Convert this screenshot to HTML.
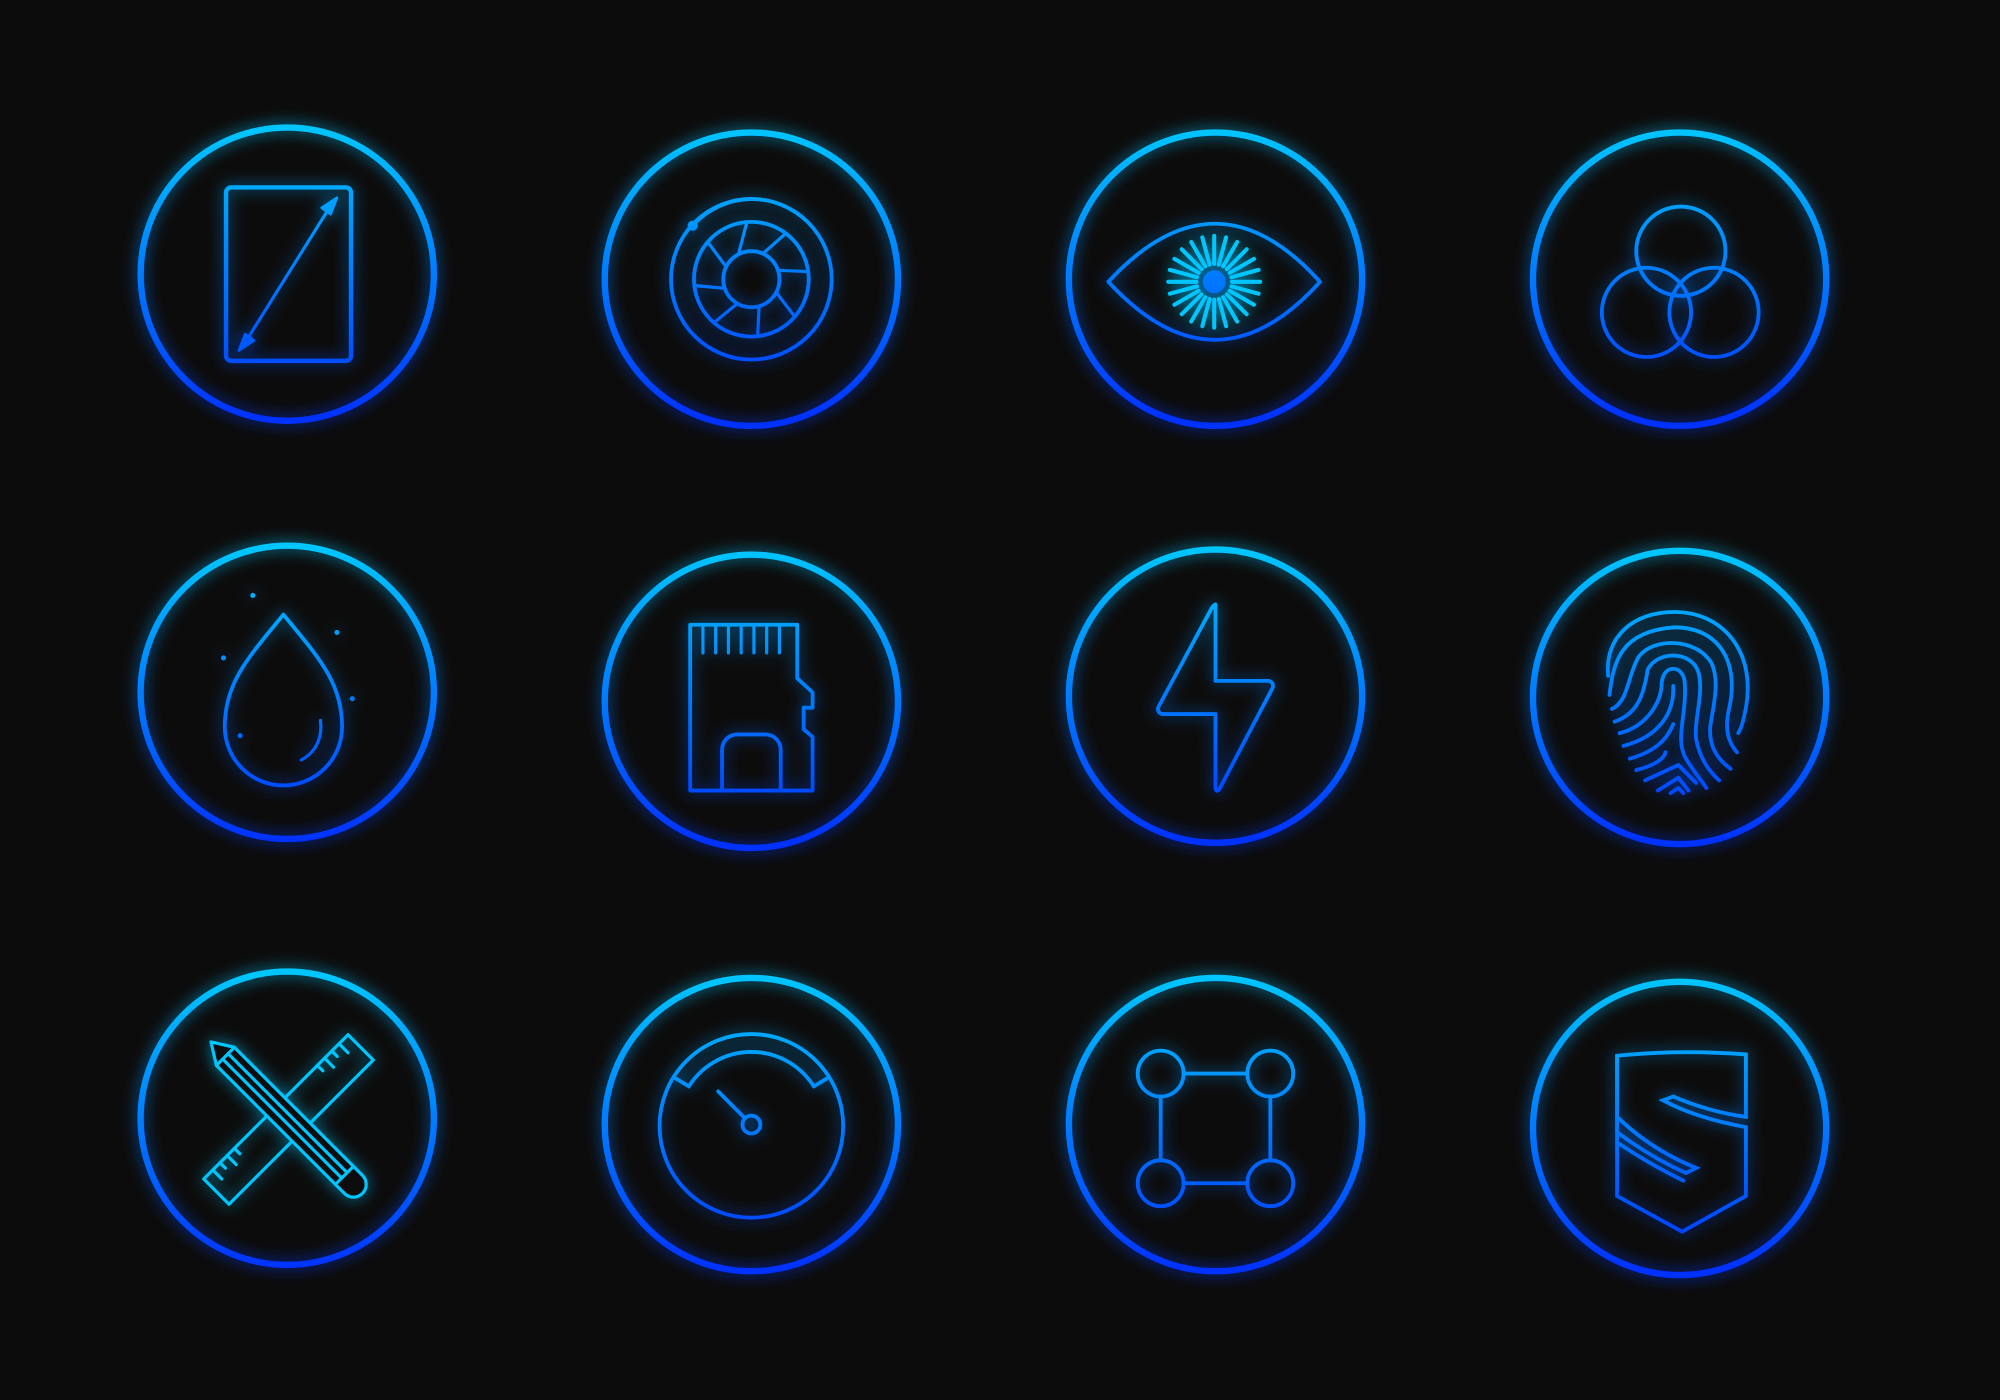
<!DOCTYPE html>
<html><head><meta charset="utf-8"><style>
html,body{margin:0;padding:0;background:#0c0c0c;}
svg{display:block}
</style></head><body>
<svg width="2000" height="1400" viewBox="0 0 1568 1098" xmlns="http://www.w3.org/2000/svg">
<defs>
<linearGradient id="g1" gradientUnits="userSpaceOnUse" x1="0" y1="100" x2="0" y2="330"><stop offset="0" stop-color="#00c6ff"/><stop offset="1" stop-color="#0530ff"/></linearGradient>
<linearGradient id="g2" gradientUnits="userSpaceOnUse" x1="0" y1="430" x2="0" y2="662"><stop offset="0" stop-color="#00c6ff"/><stop offset="1" stop-color="#0530ff"/></linearGradient>
<linearGradient id="g3" gradientUnits="userSpaceOnUse" x1="0" y1="765" x2="0" y2="998"><stop offset="0" stop-color="#00c6ff"/><stop offset="1" stop-color="#0530ff"/></linearGradient>
<filter id="glow" x="-30%" y="-30%" width="160%" height="160%">
<feGaussianBlur in="SourceGraphic" stdDeviation="6" result="b"/>
<feComponentTransfer in="b" result="b2"><feFuncA type="linear" slope="0.8"/></feComponentTransfer>
<feMerge><feMergeNode in="b2"/><feMergeNode in="SourceGraphic"/></feMerge>
</filter>
</defs>
<rect width="1568" height="1098" fill="#0c0c0c"/>

<g fill="none" stroke-linecap="round" stroke-linejoin="round" filter="url(#glow)">
<!-- row 1 -->
<g stroke="url(#g1)">
<circle cx="225" cy="215" r="115" stroke-width="5"/>
<circle cx="589" cy="219" r="115" stroke-width="5"/>
<circle cx="953" cy="219" r="115" stroke-width="5"/>
<circle cx="1317" cy="219" r="115" stroke-width="5"/>
<!-- tablet -->
<rect x="177" y="147" width="98" height="136" rx="4" stroke-width="3.5"/>
<line x1="258" y1="163" x2="193" y2="267" stroke-width="2.5"/>
<path d="M264 155 L252 163 L259 168 Z M187 275 L199 267 L192 262 Z" fill="url(#g1)" stroke-width="2"/>
<!-- aperture -->
<circle cx="589" cy="219" r="63" stroke-width="3"/>
<circle cx="589" cy="219" r="45" stroke-width="3"/>
<circle cx="589" cy="219" r="22" stroke-width="3"/>
<g stroke-width="2.5">
<line x1="579" y1="199" x2="585" y2="176"/>
<line x1="598" y1="199" x2="615" y2="184"/>
<line x1="610" y1="212" x2="633" y2="213"/>
<line x1="609" y1="230" x2="622" y2="247"/>
<line x1="595" y1="240" x2="594" y2="263"/>
<line x1="578" y1="238" x2="561" y2="252"/>
<line x1="567" y1="226" x2="545" y2="224"/>
<line x1="569" y1="209" x2="555" y2="190"/>
</g>
<circle cx="543" cy="177" r="4" fill="url(#g1)" stroke="none"/>
<path d="M543 177 A63 63 0 0 1 589 156" stroke-width="3"/>
<!-- eye -->
<path d="M869 221 Q953 130 1035 221 Q953 312 869 221 Z" stroke-width="3"/>
<circle cx="952" cy="221" r="9" fill="url(#g1)" stroke="none"/>
<g stroke-width="3.2" transform="translate(952 221)">
<g id="rays">
<line x1="0" y1="-14" x2="0" y2="-36"/>
<line x1="0" y1="14" x2="0" y2="36"/>
<line x1="-14" y1="0" x2="-36" y2="0"/>
<line x1="14" y1="0" x2="36" y2="0"/>
</g>
<use href="#rays" transform="rotate(15)"/>
<use href="#rays" transform="rotate(30)"/>
<use href="#rays" transform="rotate(45)"/>
<use href="#rays" transform="rotate(60)"/>
<use href="#rays" transform="rotate(75)"/>
</g>
<!-- three circles -->
<circle cx="1318" cy="197" r="35" stroke-width="3"/>
<circle cx="1291" cy="245" r="35" stroke-width="3"/>
<circle cx="1344" cy="245" r="35" stroke-width="3"/>
</g>

<!-- row 2 -->
<g stroke="url(#g2)">
<circle cx="225" cy="543" r="115" stroke-width="5"/>
<circle cx="589" cy="550" r="115" stroke-width="5"/>
<circle cx="953" cy="546" r="115" stroke-width="5"/>
<circle cx="1317" cy="547" r="115" stroke-width="5"/>
<!-- drop -->
<path d="M222 482 C195 515 176 535 176 570 A46 46 0 0 0 268 570 C268 535 249 515 222 482 Z" stroke-width="3"/>
<path d="M251 565 C253 580 246 591 236 596" stroke-width="2.5"/>
<g fill="url(#g2)" stroke="none">
<circle cx="198" cy="467" r="2"/><circle cx="264" cy="496" r="2"/><circle cx="175" cy="516" r="2"/><circle cx="276" cy="548" r="2"/><circle cx="188" cy="577" r="2"/>
</g>
<!-- sd card -->
<path d="M541 490 L625 490 L625 532 L637 543 L637 555 L630 555 L630 572 L637 578 L637 620 L541 620 Z" stroke-width="3"/>
<path d="M566 620 L566 588 A12 12 0 0 1 578 576 L600 576 A12 12 0 0 1 612 588 L612 620" stroke-width="3"/>
<g stroke-width="2.5">
<line x1="551" y1="492" x2="551" y2="512"/><line x1="561" y1="492" x2="561" y2="512"/><line x1="571" y1="492" x2="571" y2="512"/><line x1="581" y1="492" x2="581" y2="512"/><line x1="591" y1="492" x2="591" y2="512"/><line x1="601" y1="492" x2="601" y2="512"/><line x1="611" y1="492" x2="611" y2="512"/>
</g>
<!-- lightning -->
<path d="M953 474 L953 534 L995 534 Q1000 536 997 541 L956 619 Q953 622 953 617 L953 560 L911 560 Q906 558 909 553 L950 477 Q953 472 953 477 Z" stroke-width="3"/>
<!-- fingerprint -->
<g stroke-width="3">
<path d="M1261 530 C1258 500 1280 480 1313 480 C1350 480 1377 510 1369 555 C1367 565 1366 570 1363 575"/>
<path d="M1262 545 C1265 520 1270 495 1313 492 C1347 492 1364 518 1356 555 C1352 572 1355 582 1362 590"/>
<path d="M1264 556 C1277 550 1276 530 1285 515 C1296 500 1330 500 1342 520 C1349 535 1343 555 1341 570 C1340 585 1346 595 1357 603"/>
<path d="M1266 566 C1284 560 1289 545 1292 525 C1300 510 1327 510 1332 528 C1336 545 1328 565 1330 580 C1333 595 1340 605 1348 612"/>
<path d="M1270 575 C1290 570 1303 552 1303 535 C1305 520 1320 522 1321 535 C1323 560 1313 580 1322 595 C1328 605 1334 612 1338 618"/>
<path d="M1273 585 C1300 578 1313 560 1312 538"/>
<path d="M1278 595 C1303 588 1309 575 1312 568"/>
<path d="M1283 604 C1298 600 1305 595 1306 590"/>
<path d="M1290 612 L1316 600 L1330 614"/>
<path d="M1300 620 L1316 610 L1324 620"/>
<path d="M1310 622 L1316 618 L1320 622"/>
</g>
</g>

<!-- row 3 -->
<g stroke="url(#g3)">
<circle cx="225" cy="877" r="115" stroke-width="5"/>
<circle cx="589" cy="882" r="115" stroke-width="5"/>
<circle cx="953" cy="882" r="115" stroke-width="5"/>
<circle cx="1317" cy="885" r="115" stroke-width="5"/>
<!-- pencil & ruler -->
<g transform="translate(226 878) rotate(-45)" stroke-width="2.5">
<rect x="-80" y="-14" width="160" height="28"/>
<line x1="-70" y1="-14" x2="-70" y2="-4"/><line x1="-62" y1="-14" x2="-62" y2="-8"/><line x1="-54" y1="-14" x2="-54" y2="-4"/><line x1="-46" y1="-14" x2="-46" y2="-8"/>
<line x1="46" y1="-14" x2="46" y2="-8"/><line x1="54" y1="-14" x2="54" y2="-4"/><line x1="62" y1="-14" x2="62" y2="-8"/><line x1="70" y1="-14" x2="70" y2="-4"/>
</g>
<g transform="translate(226 878) rotate(45)" stroke-width="2.5">
<path d="M-70 -10 L72 -10 A10 10 0 0 1 72 10 L-70 10 L-86 0 Z" fill="#0c0c0c"/>
<line x1="-70" y1="-10" x2="-70" y2="10"/>
<line x1="-70" y1="-3" x2="62" y2="-3"/>
<line x1="-70" y1="3" x2="62" y2="3"/>
<line x1="62" y1="-10" x2="62" y2="10"/>
</g>
<!-- gauge -->
<circle cx="589" cy="883" r="72" stroke-width="3"/>
<path d="M540 852 A58 58 0 0 1 638 852" stroke-width="3"/>
<path d="M530 846 L540 852 M648 846 L638 852" stroke-width="3"/>
<line x1="563" y1="856" x2="584" y2="877" stroke-width="3"/>
<circle cx="589" cy="882" r="7" stroke-width="3"/>
<!-- nodes -->
<circle cx="910" cy="842" r="18" stroke-width="3"/>
<circle cx="996" cy="842" r="18" stroke-width="3"/>
<circle cx="910" cy="928" r="18" stroke-width="3"/>
<circle cx="996" cy="928" r="18" stroke-width="3"/>
<path d="M928 842 L978 842 M928 928 L978 928 M910 860 L910 910 M996 860 L996 910" stroke-width="3"/>
<!-- shield S -->
<path d="M1268 828 Q1318 823 1369 827 L1369 876 Q1340 872 1312 860 L1304 863 Q1330 877 1369 884 L1369 938 L1319 966 L1268 938 Z" stroke-width="3" stroke-linejoin="miter"/>
<path d="M1268 828 L1268 888 Q1295 908 1322 920 L1330 916 Q1295 902 1268 876" stroke-width="3" stroke-linejoin="miter"/>
<path d="M1268 896 Q1295 914 1320 926" stroke-width="3"/>
</g>
</g>
</svg>
</body></html>
